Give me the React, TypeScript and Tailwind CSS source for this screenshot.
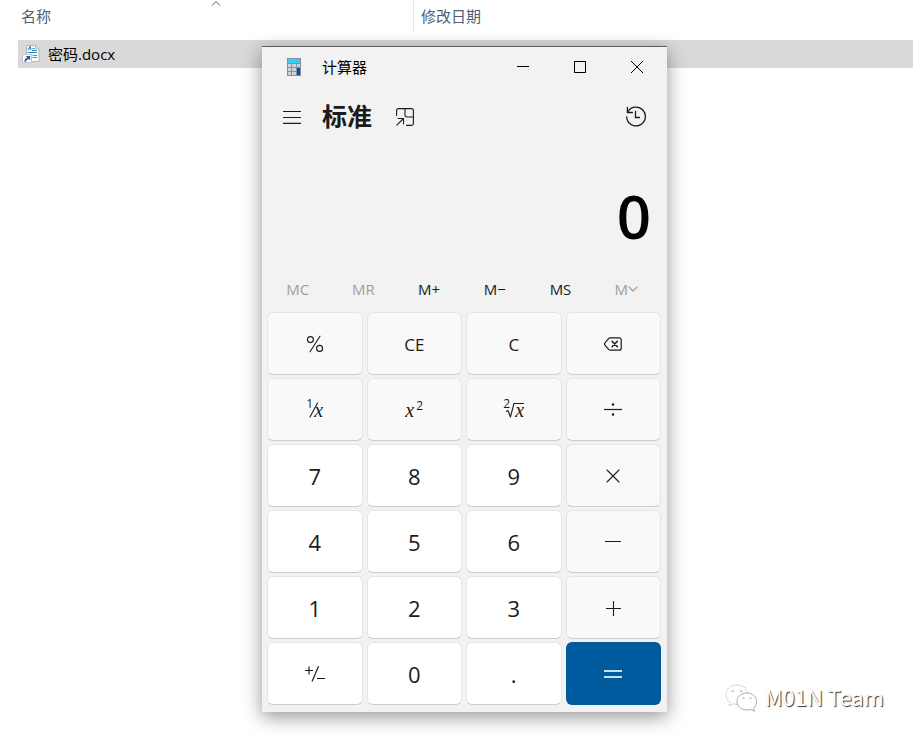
import type { ReactNode } from 'react';

interface Key {
  label: string;
  content: ReactNode;
  kind: 'function' | 'digit' | 'equals';
}

const strokeProps = {
  fill: 'none',
  stroke: 'currentColor',
  strokeLinecap: 'round' as const,
  strokeLinejoin: 'round' as const,
};

function BackspaceIcon() {
  return (
    <svg width="18" height="14" viewBox="0 0 18 14" {...strokeProps} strokeWidth="1.2">
      <path d="M6.2 .8h9a2 2 0 0 1 2 2v8.4a2 2 0 0 1-2 2h-9a2 2 0 0 1-1.4-.6L1.2 8.4a2 2 0 0 1 0-2.8l3.6-4.2a2 2 0 0 1 1.4-.6Z" />
      <path d="m8 4.2 5.4 5.6M13.4 4.2 8 9.8" strokeWidth="1.5" />
    </svg>
  );
}

function PercentIcon() {
  return (
    <svg width="18" height="18" viewBox="0 0 18 18" {...strokeProps} strokeWidth="1.1">
      <circle cx="4.4" cy="4.6" r="3" />
      <circle cx="13.6" cy="13.4" r="3" />
      <path d="M14 1.2 4 16.8" />
    </svg>
  );
}

function DivideIcon() {
  return (
    <svg width="18" height="14" viewBox="0 0 18 14" {...strokeProps} strokeWidth="1.2">
      <path d="M0 6.5h18" strokeLinecap="butt" />
      <circle cx="9" cy="1.5" r="1.2" fill="currentColor" stroke="none" />
      <circle cx="9" cy="11.5" r="1.2" fill="currentColor" stroke="none" />
    </svg>
  );
}

function TimesIcon() {
  return (
    <svg width="14" height="14" viewBox="0 0 14 14" {...strokeProps} strokeWidth="1.1">
      <path d="m1 1 12 12M13 1 1 13" />
    </svg>
  );
}

function MinusIcon() {
  return (
    <svg width="16" height="17" viewBox="0 0 16 17" {...strokeProps}>
      <path d="M0 7.5h16" strokeLinecap="butt" />
    </svg>
  );
}

function PlusIcon() {
  return (
    <svg width="15" height="15" viewBox="0 0 15 15" {...strokeProps} strokeWidth="1.1">
      <path d="M0 7.5h15M7.5 0v15" strokeLinecap="butt" />
    </svg>
  );
}

function EqualsIcon() {
  return (
    <svg width="18" height="10" viewBox="0 0 18 10" fill="none" stroke="currentColor" strokeWidth="2">
      <path d="M0 2h18M0 8h18" />
    </svg>
  );
}

function SignIcon() {
  return (
    <svg width="22" height="18" viewBox="0 0 22 18" {...strokeProps} strokeWidth="1.2">
      <path d="M1 5.5h8M5 1.5v8M14.6 1.2 8 16.6M13 13.5h8" strokeLinecap="butt" />
    </svg>
  );
}

function Reciprocal() {
  return (
    <span className="flex items-center">
      <span className="-mt-3 text-xs">1</span>
      <svg width="9" height="16" viewBox="0 0 9 16" className="-mx-1" {...strokeProps} strokeWidth="1.1">
        <path d="M8.5 1 1 15" />
      </svg>
      <i className="font-['Liberation_Serif',serif] text-xl">x</i>
    </span>
  );
}

function Square() {
  return (
    <span className="flex items-center gap-0.5">
      <i className="font-['Liberation_Serif',serif] text-xl">x</i>
      <span className="-mt-2 text-xs">2</span>
    </span>
  );
}

function SquareRoot() {
  return (
    <span className="relative flex items-center">
      <span className="-mt-3 text-xs">2</span>
      <svg width="18" height="17" viewBox="0 0 18 17" className="-ml-1" {...strokeProps} strokeWidth="1.1">
        <path d="M0 9.5 2 8.5l2.4 6.5L8 1.5h10" />
      </svg>
      <i className="absolute right-0 font-['Liberation_Serif',serif] text-xl">x</i>
    </span>
  );
}

const keys: Key[] = [
  { label: 'Percent', content: <PercentIcon />, kind: 'function' },
  { label: 'Clear entry', content: <span className="pt-0.5 text-[17px]">CE</span>, kind: 'function' },
  { label: 'Clear', content: <span className="pt-0.5 text-[17px]">C</span>, kind: 'function' },
  { label: 'Backspace', content: <BackspaceIcon />, kind: 'function' },
  { label: 'Reciprocal', content: <Reciprocal />, kind: 'function' },
  { label: 'Square', content: <Square />, kind: 'function' },
  { label: 'Square root', content: <SquareRoot />, kind: 'function' },
  { label: 'Divide by', content: <DivideIcon />, kind: 'function' },
  { label: 'Seven', content: '7', kind: 'digit' },
  { label: 'Eight', content: '8', kind: 'digit' },
  { label: 'Nine', content: '9', kind: 'digit' },
  { label: 'Multiply by', content: <TimesIcon />, kind: 'function' },
  { label: 'Four', content: '4', kind: 'digit' },
  { label: 'Five', content: '5', kind: 'digit' },
  { label: 'Six', content: '6', kind: 'digit' },
  { label: 'Minus', content: <MinusIcon />, kind: 'function' },
  { label: 'One', content: '1', kind: 'digit' },
  { label: 'Two', content: '2', kind: 'digit' },
  { label: 'Three', content: '3', kind: 'digit' },
  { label: 'Plus', content: <PlusIcon />, kind: 'function' },
  { label: 'Positive negative', content: <SignIcon />, kind: 'digit' },
  { label: 'Zero', content: '0', kind: 'digit' },
  { label: 'Decimal separator', content: '.', kind: 'digit' },
  { label: 'Equals', content: <EqualsIcon />, kind: 'equals' },
];

const keyStyles = {
  function: 'border border-[#e5e5e5] border-b-[#cccccc] bg-[#f9f9f9] text-[#1b1b1b]',
  digit: 'border border-[#e5e5e5] border-b-[#cccccc] bg-white text-[#1b1b1b]',
  equals: 'bg-[#005a9e] text-[#c9e0f0]',
};

const memoryKeys = [
  { text: 'MC', disabled: true },
  { text: 'MR', disabled: true },
  { text: 'M+', disabled: false },
  { text: 'M−', disabled: false },
  { text: 'MS', disabled: false },
  { text: 'M', disabled: true, menu: true },
];

function DocumentIcon() {
  return (
    <svg width="18" height="20" viewBox="0 0 18 20" fill="none">
      <path d="M4.5 1.5h9l3.5 3.5v12.5H4.5z" fill="#fff" stroke="#b4b4b4" />
      <path d="M13.5 1.5V5H17" stroke="#b4b4b4" />
      <path d="m6 6 2-3.4L9 6" stroke="#2b8bc9" strokeWidth="1.2" />
      <path d="M10.5 4.5h2M10 6.5h5M5.5 8.5H15" stroke="#2b8bc9" />
      <path d="M10.5 11.5H15M10.5 13.5H15" stroke="#5f8fa8" />
      <path d="M.5 10.5h9v8h-9z" fill="#fff" stroke="#c4c4c4" />
      <path d="M3.8 12h4.4v4.4L6.8 15C5.2 15.6 4 16.6 3.8 17.8H2.4c-.2-2 .9-3.6 2.8-4.4z" fill="#2d5a96" />
    </svg>
  );
}

function CalculatorIcon() {
  return (
    <svg width="16" height="20" viewBox="0 0 16 20">
      <rect x="1" y="1" width="14" height="18" fill="#84909b" />
      <rect x="2" y="2" width="12" height="4" fill="#35cdf4" />
      <path d="M2 7h3v3H2zM6 7h4v3H6zM11 7h3v3h-3zM2 11h3v3H2zM6 11h4v3H6zM2 15h3v3H2zM6 15h4v3H6z" fill="#ccd3d9" />
      <rect x="11" y="11" width="3" height="7" fill="#124e8f" />
    </svg>
  );
}

function Explorer() {
  return (
    <div className="pl-[18px]">
      <table className="w-full table-fixed border-collapse text-left text-[15px]">
        <thead>
          <tr className="text-[#4c607a]">
            <th className="h-10 w-[396px] p-0 align-top font-normal">
              <div className="relative flex h-8 items-center border-r border-[#e5e5e5] pl-[3px]">
                名称
                <svg width="10" height="6" viewBox="0 0 10 6" className="absolute top-0 left-1/2 -translate-x-1/2" fill="none" stroke="#5a5a5a">
                  <path d="m1 5.5 4-4 4 4" />
                </svg>
              </div>
            </th>
            <th className="h-10 p-0 align-top font-normal">
              <div className="flex h-8 items-center pl-[7px]">修改日期</div>
            </th>
          </tr>
        </thead>
        <tbody>
          <tr className="bg-[#d9d9d9] text-black">
            <td className="h-7 p-0">
              <div className="flex items-center gap-2 pl-1">
                <DocumentIcon />
                密码.docx
              </div>
            </td>
            <td className="p-0" />
          </tr>
        </tbody>
      </table>
    </div>
  );
}

function TitleBar() {
  return (
    <header className="flex h-10 items-center pr-0.5 pl-6 text-[15px]">
      <CalculatorIcon />
      <h1 className="ml-5 flex-1">计算器</h1>
      <button aria-label="Minimize" className="flex h-10 w-[57px] items-center justify-center">
        <svg width="12" height="12" viewBox="0 0 12 12" stroke="black">
          <path d="M0 5.5h12" />
        </svg>
      </button>
      <button aria-label="Maximize" className="flex h-10 w-[57px] items-center justify-center">
        <svg width="12" height="12" viewBox="0 0 12 12" fill="none" stroke="black">
          <rect x=".5" y=".5" width="11" height="11" />
        </svg>
      </button>
      <button aria-label="Close" className="flex h-10 w-[57px] items-center justify-center">
        <svg width="12" height="12" viewBox="0 0 12 12" stroke="black">
          <path d="m0 0 12 12M12 0 0 12" />
        </svg>
      </button>
    </header>
  );
}

function Calculator() {
  return (
    <main className="absolute top-[46px] left-[262px] w-[405px] border-t border-[#5e5e62] bg-[#f2f2f2] shadow-[0_5px_18px_rgba(0,0,0,0.42)]">
      <TitleBar />

      <div className="flex h-[60px] items-center px-5 text-[#1b1b1b]">
        <button aria-label="Open navigation">
          <svg width="20" height="14" viewBox="0 0 20 14" fill="none" stroke="currentColor" strokeWidth="1.1">
            <path d="M1 1.5h18M1 7.5h18M1 13.4h18" />
          </svg>
        </button>
        <h2 className="ml-5 text-[25px] font-bold">标准</h2>
        <button aria-label="Keep on top" className="ml-6">
          <svg width="18" height="18" viewBox="0 0 18 18" {...strokeProps} strokeWidth="1.1">
            <path d="M.6 7.5V2.4A1.8 1.8 0 0 1 2.4.6h13.2a1.8 1.8 0 0 1 1.8 1.8v13.2a1.8 1.8 0 0 1-1.8 1.8h-5.1" />
            <path d="M9 .6v6.6A1.8 1.8 0 0 0 10.8 9h6.6M.8 17.2l6.7-6.7M2 10.5h5.5V16" />
          </svg>
        </button>
        <button aria-label="History" className="ml-auto">
          <svg width="22" height="22" viewBox="0 0 22 22" {...strokeProps} strokeWidth="1.3">
            <path d="M2.6 6.2A9.4 9.4 0 1 1 1.6 11" />
            <path d="M2.4 1.5v5h5M10.5 5.5v6h4" strokeLinejoin="miter" />
          </svg>
        </button>
      </div>

      <output className="flex h-[121px] items-end justify-end pr-4 pb-[22px] text-[60px] leading-none font-semibold text-black">
        0
      </output>

      <div className="grid h-11 grid-cols-6 pr-2 pb-0.5 pl-[3px] text-[15px]">
        {memoryKeys.map((key) => (
          <button
            key={key.text + String(key.menu)}
            disabled={key.disabled}
            className="flex items-center justify-center text-[#1b1b1b] disabled:text-[#9f9f9f]"
          >
            {key.text}
            {key.menu && (
              <svg width="10" height="6" viewBox="0 0 10 6" {...strokeProps} strokeWidth="1.1">
                <path d="m1 1 4 4 4-4" />
              </svg>
            )}
          </button>
        ))}
      </div>

      <div className="grid grid-cols-4 gap-x-1 gap-y-[3px] pr-1.5 pb-[7px] pl-[5px] text-[22px]">
        {keys.map((key) => (
          <button
            key={key.label}
            aria-label={key.label}
            className={`flex h-[63px] items-center justify-center rounded-md pt-px ${keyStyles[key.kind]}`}
          >
            {key.content}
          </button>
        ))}
      </div>
    </main>
  );
}

function Watermark() {
  return (
    <div className="absolute right-[29px] bottom-6 flex items-start gap-2">
      <svg width="32" height="28" viewBox="0 0 32 28" fill="#fff" stroke="#8a8a8a" strokeWidth=".7">
        <path
          d="M12 1C5.5 1 1 5 1 10.5c0 3.5 1.5 6 4 8L4 22l4-2.2c2 .6 4 .7 6 .4L23 10C22 4.5 18 1 12 1Z"
          strokeDasharray="2 1"
          strokeWidth=".5"
        />
        <path d="M22 9c-5.5 0-10 3.6-10 8.500S16.500 26 22 26c1.5 0 2.8-.2 4-.6l3.5 2-1-3.2c2-1.700 3-4 3-6.700C31.500 12.600 27.500 9 22 9Z" />
        <path d="M6.5 7.5q1-1.5 2.4 0M15 7.5q1-1.5 2.4 0M17.5 14.5q1-1.400 2 0M24.500 14.500q1-1.400 2 0" fill="none" stroke="#666" />
      </svg>
      <span className="font-['Noto_Sans_CJK_SC',sans-serif] text-[22px] leading-6 text-white [text-shadow:1px_1px_1px_#333]">M01N Team</span>
    </div>
  );
}

export default function App() {
  return (
    <div className="relative min-h-screen overflow-hidden bg-white font-['Open_Sans','Noto_Sans_CJK_SC',sans-serif]">
      <Explorer />
      <Calculator />
      <Watermark />
    </div>
  );
}
